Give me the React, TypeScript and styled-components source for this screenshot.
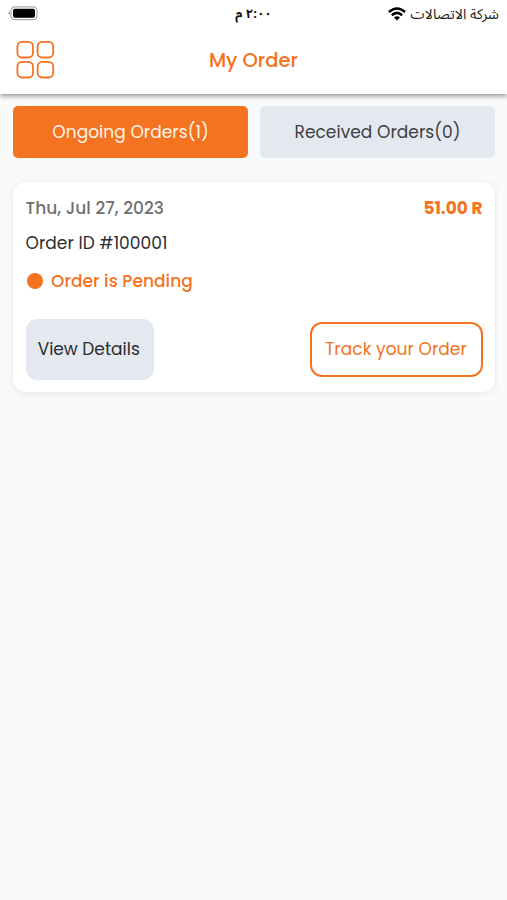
import React from "react";
import styled, { createGlobalStyle } from "styled-components";

const orange = "#f37321";
const slate = "#e4e9ef";

const GlobalStyle = createGlobalStyle`
  * { box-sizing: border-box; }
  body { margin: 0; background: #fafafa; font-family: Poppins, Inter, sans-serif; }
  button { font: inherit; cursor: pointer; }
`;

const Screen = styled.div`
  min-height: 900px;
  background: #fafafa;
`;

const Header = styled.header`
  height: 94px;
  background: #fff;
  box-shadow: 0 2px 5px rgba(0, 0, 0, 0.42);
`;

const StatusBar = styled.div`
  height: 27px;
  padding: 0 8px;
  display: grid;
  grid-template-columns: 1fr auto 1fr;
  align-items: center;
  color: #222;
  font-family: "Noto Sans Arabic", "DejaVu Sans", sans-serif;
  line-height: 20px;
`;

const Clock = styled.span`
  color: #111;
  font-size: 13px;
  font-weight: 700;
  letter-spacing: -1px;
  white-space: nowrap;
`;

const Carrier = styled.div`
  display: flex;
  align-items: center;
  justify-content: flex-end;
  gap: 5px;
  white-space: nowrap;
  font-size: 14.2px;
`;

const TitleBar = styled.div`
  height: 67px;
  padding: 0 15.5px;
  display: grid;
  grid-template-columns: 40px 1fr 40px;
  align-items: center;
`;

const MenuButton = styled.button`
  height: 40px;
  padding: 0;
  border: 0;
  background: none;
  margin-top: -2px;
  svg { display: block; }
`;

const Text = styled.span<{ $spacing?: number; $weight?: number; $color?: string; $size?: number }>`
  color: ${(p) => p.$color ?? "#2c2d30"};
  font-size: ${(p) => p.$size ?? 17}px;
  font-weight: ${(p) => p.$weight ?? 400};
  letter-spacing: ${(p) => p.$spacing ?? 0.05}px;
  line-height: 26px;
  white-space: nowrap;
`;

const Title = styled(Text)`
  text-align: center;
`;

const Tabs = styled.nav`
  display: grid;
  grid-template-columns: 1fr 1fr;
  gap: 12px;
  padding: 12px 12px 0 13px;
`;

const Tab = styled.button<{ $active?: boolean }>`
  height: 52px;
  padding: 0;
  border: 0;
  border-radius: 5px;
  background: ${(p) => (p.$active ? orange : slate)};
`;

const Card = styled.article`
  height: 210px;
  margin: 24px 12px 0 13px;
  padding: 13px 12.5px 12px;
  border-radius: 13px;
  background: #fff;
  box-shadow: 0 1px 7px rgba(0, 0, 0, 0.09);
  display: flex;
  flex-direction: column;
`;

const Row = styled.div`
  display: flex;
  align-items: center;
  justify-content: space-between;
`;

const OrderId = styled(Row)`
  margin-top: 9px;
`;

const Status = styled.div`
  margin-top: 12px;
  display: flex;
  align-items: center;
  gap: 8px;
`;

const Dot = styled.span`
  width: 16px;
  height: 16px;
  margin-left: 1.5px;
  border-radius: 50%;
  background: ${orange};
`;

const Actions = styled(Row)`
  margin-top: auto;
`;

const DetailsButton = styled.button`
  width: 128px;
  height: 61px;
  padding: 0 1.5px 1px 0;
  border: 0;
  border-radius: 11px;
  background: ${slate};
`;

const TrackButton = styled.button`
  width: 173px;
  height: 55px;
  padding: 0 0 1px;
  border: 2px solid ${orange};
  border-radius: 12px;
  background: #fff;
`;

const Battery = () => (
  <svg width="32" height="16" viewBox="0 0 32 16">
    <path d="M2 5.5Q-1 7.2 2 9Z" fill="#999" />
    <rect x="3" y="0.8" width="26" height="12.8" rx="3.8" fill="#fff" stroke="#aaa" strokeWidth="1.2" />
    <rect x="5" y="2.8" width="22" height="8.9" rx="2" fill="#000" />
  </svg>
);

const Wifi = () => (
  <svg width="18" height="14" viewBox="0 0 18 14" fill="none" stroke="#000" strokeWidth="2.5">
    <path d="M.9 5Q9-2 17.1 5" />
    <path d="M3.8 8.2Q9 3.6 14.2 8.2" />
    <path d="M9 13.6 6 10.6Q9 8 12 10.6Z" fill="#000" stroke="none" />
  </svg>
);

const GridIcon = () => (
  <svg width="40" height="40" viewBox="0 0 40 40" fill="none" stroke={orange} strokeWidth="1.8">
    <rect x="1.4" y="1.9" width="15.6" height="15.6" rx="4.5" />
    <rect x="21.6" y="1.9" width="15.6" height="15.6" rx="4.5" />
    <rect x="1.4" y="21.9" width="15.6" height="15.6" rx="4.5" />
    <rect x="21.6" y="21.9" width="15.6" height="15.6" rx="4.5" />
  </svg>
);

export default function App() {
  return (
    <Screen>
      <GlobalStyle />
      <Header>
        <StatusBar>
          <Battery />
          <Clock dir="rtl">٢:٠٠ م</Clock>
          <Carrier>
            <Wifi />
            <span dir="rtl">شركة الاتصالات</span>
          </Carrier>
        </StatusBar>
        <TitleBar>
          <MenuButton aria-label="Menu"><GridIcon /></MenuButton>
          <Title $size={19.5} $weight={500} $spacing={0} $color={orange}>My Order</Title>
        </TitleBar>
      </Header>
      <Tabs>
        <Tab $active><Text $color="#fff4e8">Ongoing Orders(1)</Text></Tab>
        <Tab><Text $color="#3b3f44">Received Orders(0)</Text></Tab>
      </Tabs>
      <Card>
        <Row>
          <Text $weight={500} $color="#707070">Thu, Jul 27, 2023</Text>
          <Text $weight={700} $color={orange} $size={17} $spacing={0}>51.00 R</Text>
        </Row>
        <OrderId><Text>Order ID #100001</Text></OrderId>
        <Status>
          <Dot />
          <Text $weight={500} $color={orange}>Order is Pending</Text>
        </Status>
        <Actions>
          <DetailsButton><Text $spacing={0}>View Details</Text></DetailsButton>
          <TrackButton><Text $color={orange}>Track your Order</Text></TrackButton>
        </Actions>
      </Card>
    </Screen>
  );
}
